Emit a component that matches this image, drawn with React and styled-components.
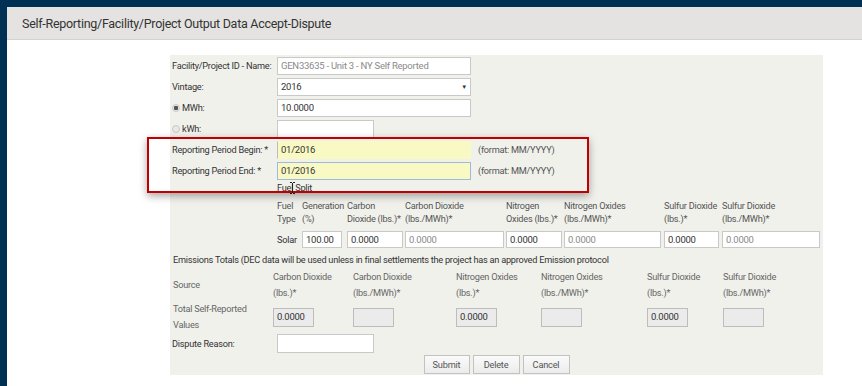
import styled, { createGlobalStyle } from 'styled-components'

const GlobalStyle = createGlobalStyle`
  html, body {
    margin: 0;
    padding: 0;
    background: #003154;
    font-family: Roboto, "Open Sans", sans-serif;
    color: #333;
  }
`

const Page = styled.div`
  padding: 7px 0 0 7px;
  height: 379px;
  overflow: hidden;
`

const Modal = styled.div`
  background: #fff;
  height: 379px;
`

const Header = styled.div`
  height: 32px;
  line-height: 33px;
  background: #e4e3e1;
  border-bottom: 1px solid #d3d2d0;
  padding-left: 15px;
  font-size: 12.5px;
  letter-spacing: -0.28px;
  color: #333;
`

const Body = styled.div`
  padding: 15px 0 0 163px;
`

const Panel = styled.div`
  position: relative;
  width: 649px;
  background: #f1f1ec;
  padding: 0 2px 1px 2px;
  font-size: 9.2px;
  letter-spacing: -0.25px;
`

const Row = styled.div`
  display: flex;
  align-items: center;
  height: ${p => p.$h || 21}px;
`

const Label = styled.div`
  width: 105px;
  flex: none;
  display: flex;
  align-items: center;
  color: ${p => p.$muted ? '#666' : '#333'};
  line-height: 16px;
`

const Radio = styled.span`
  width: 8px;
  height: 8px;
  border-radius: 50%;
  border: 1px solid #c8c8c8;
  background: radial-gradient(circle, ${p => p.$on ? '#555 0 2px, #e8e8e8 2.5px' : '#e8e8e8 0'});
  margin-right: 2px;
  box-sizing: border-box;
`

const Input = styled.div`
  box-sizing: border-box;
  width: ${p => p.$w}px;
  height: ${p => p.$h || 18}px;
  flex: none;
  border: 1px solid ${p => p.$focus ? '#9fb9dd' : p.$disabled ? '#bdbdbd' : '#c9c9c9'};
  background: ${p => p.$yellow ? '#f9f9c4' : p.$disabled ? '#ebebeb' : '#fff'};
  color: ${p => p.$grey ? '#8a8a8a' : '#333'};
  padding: 0 3px;
  display: flex;
  align-items: center;
  justify-content: space-between;
  font-size: 9.5px;
  ${p => p.$yellow && !p.$focus && 'border-color: #f9f9c4 #f9f9c4 #f9f9c4 #bbb;'}
`

const Arrow = styled.span`
  font-size: 6px;
  color: #333;
`

const Hint = styled.span`
  margin-left: 7px;
  color: #555;
`

const FuelGrid = styled.div`
  display: grid;
  grid-template-columns: 25px 45px 58px 101px 58px 100px 58px 98px;
  margin-left: 105px;
  color: #555;
  line-height: 13px;
`

const HeadCell = styled.div`
  height: ${p => p.$h || 29}px;
  margin-top: ${p => p.$mt || 0}px;
  padding-top: ${p => p.$pt || 0}px;
  box-sizing: border-box;
  white-space: nowrap;
  color: ${p => p.$c || '#555'};
  ${p => p.$center && 'display: flex; align-items: center;'}
`

const Cell = styled.div`
  height: ${p => p.$h || 22}px;
  display: flex;
  align-items: center;
  color: #333;
`

const Note = styled.div`
  height: 19px;
  line-height: 20px;
  color: #333;
  padding-left: 1px;
`

const EmGrid = styled.div`
  display: grid;
  grid-template-columns: 100px 80px 103px 85px 106px 76px 99px;
  line-height: 16px;
  color: #666;
  padding-left: 1px;
`

const ButtonBar = styled.div`
  display: flex;
  justify-content: center;
  gap: 3px;
  height: 20px;
  padding-top: 1px;
  box-sizing: border-box;
`

const Button = styled.button`
  width: ${p => p.$w}px;
  height: 19px;
  padding: 0;
  border: 1px solid #c2c2c2;
  background: linear-gradient(#fafafa, #ececec);
  color: #555;
  font-family: Roboto, sans-serif;
  font-size: 9.2px;
  letter-spacing: -0.2px;
`

const Highlight = styled.div`
  position: absolute;
  left: -23px;
  top: 82px;
  width: 438px;
  height: 52px;
  border: 2px solid #c00000;
  box-shadow: 0 3px 8px rgba(0, 0, 0, 0.35);
  pointer-events: none;
`

const Caret = styled.svg`
  position: absolute;
  left: 119px;
  top: 127px;
`

const fuelHeads = [
  ['Fuel', 'Type'],
  ['Generation', '(%)'],
  ['Carbon', 'Dioxide (lbs.)*'],
  ['Carbon Dioxide', '(lbs./MWh)*'],
  ['Nitrogen', 'Oxides (lbs.)*'],
  ['Nitrogen Oxides', '(lbs./MWh)*'],
  ['Sulfur Dioxide', '(lbs.)*'],
  ['Sulfur Dioxide', '(lbs./MWh)*'],
]

const fuelInputs = [
  { w: 40, v: '100.00' },
  { w: 56, v: '0.0000' },
  { w: 99, v: '0.0000', grey: true },
  { w: 56, v: '0.0000' },
  { w: 97, v: '0.0000', grey: true },
  { w: 55, v: '0.0000' },
  { w: 98, v: '0.0000', grey: true },
]

const emHeads = [
  ['Carbon Dioxide', '(lbs.)*'],
  ['Carbon Dioxide', '(lbs./MWh)*'],
  ['Nitrogen Oxides', '(lbs.)*'],
  ['Nitrogen Oxides', '(lbs./MWh)*'],
  ['Sulfur Dioxide', '(lbs.)*'],
  ['Sulfur Dioxide', '(lbs./MWh)*'],
]

const emValues = ['0.0000', '', '0.0000', '', '0.0000', '']

export default function App() {
  return (
    <>
      <GlobalStyle />
      <Page>
        <Modal>
          <Header>Self-Reporting/Facility/Project Output Data Accept-Dispute</Header>
          <Body>
            <Panel>
              <Row>
                <Label>Facility/Project ID - Name:</Label>
                <Input $w={194} $grey>GEN33635 - Unit 3 - NY Self Reported</Input>
              </Row>
              <Row>
                <Label>Vintage:</Label>
                <Input $w={194}>2016<Arrow>▼</Arrow></Input>
              </Row>
              <Row>
                <Label><Radio $on />MWh:</Label>
                <Input $w={194}>10.0000</Input>
              </Row>
              <Row>
                <Label><Radio />kWh:</Label>
                <Input $w={97}></Input>
              </Row>
              <Row>
                <Label>Reporting Period Begin: *</Label>
                <Input $w={194} $yellow>01/2016</Input>
                <Hint>(format: MM/YYYY)</Hint>
              </Row>
              <Row>
                <Label>Reporting Period End: *</Label>
                <Input $w={194} $yellow $focus>01/2016</Input>
                <Hint>(format: MM/YYYY)</Hint>
              </Row>
              <Row $h={12}>
                <Label />
                <span>Fuel Split</span>
              </Row>
              <FuelGrid>
                {fuelHeads.map((h, i) => (
                  <HeadCell key={i} $mt={6} $h={29}>
                    {h[0]}<br />{h[1]}
                  </HeadCell>
                ))}
                <Cell>Solar</Cell>
                {fuelInputs.map((f, i) => (
                  <Cell key={i}>
                    <Input $w={f.w} $h={17} $grey={f.grey}>{f.v}</Input>
                  </Cell>
                ))}
              </FuelGrid>
              <Note>Emissions Totals (DEC data will be used unless in final settlements the project has an approved Emission protocol</Note>
              <EmGrid>
                <HeadCell $h={32} $c="#666" $center>Source</HeadCell>
                {emHeads.map((h, i) => (
                  <HeadCell key={i} $h={32} $c="#666">{h[0]}<br />{h[1]}</HeadCell>
                ))}
                <HeadCell $h={32} $c="#666">Total Self-Reported<br />Values</HeadCell>
                {emValues.map((v, i) => (
                  <Cell key={i} $h={32}>
                    <Input $w={41} $h={19} $disabled>{v}</Input>
                  </Cell>
                ))}
              </EmGrid>
              <Row>
                <Label>Dispute Reason:</Label>
                <Input $w={97} $h={19}></Input>
              </Row>
              <ButtonBar>
                <Button $w={46}>Submit</Button>
                <Button $w={47}>Delete</Button>
                <Button $w={47}>Cancel</Button>
              </ButtonBar>
              <Highlight />
              <Caret width="7" height="12" viewBox="0 0 7 12">
                <path d="M1 0.5h2M4 0.5h2M3.5 1v10M1 11.5h2M4 11.5h2" stroke="#222" strokeWidth="1" fill="none" />
              </Caret>
            </Panel>
          </Body>
        </Modal>
      </Page>
    </>
  )
}
